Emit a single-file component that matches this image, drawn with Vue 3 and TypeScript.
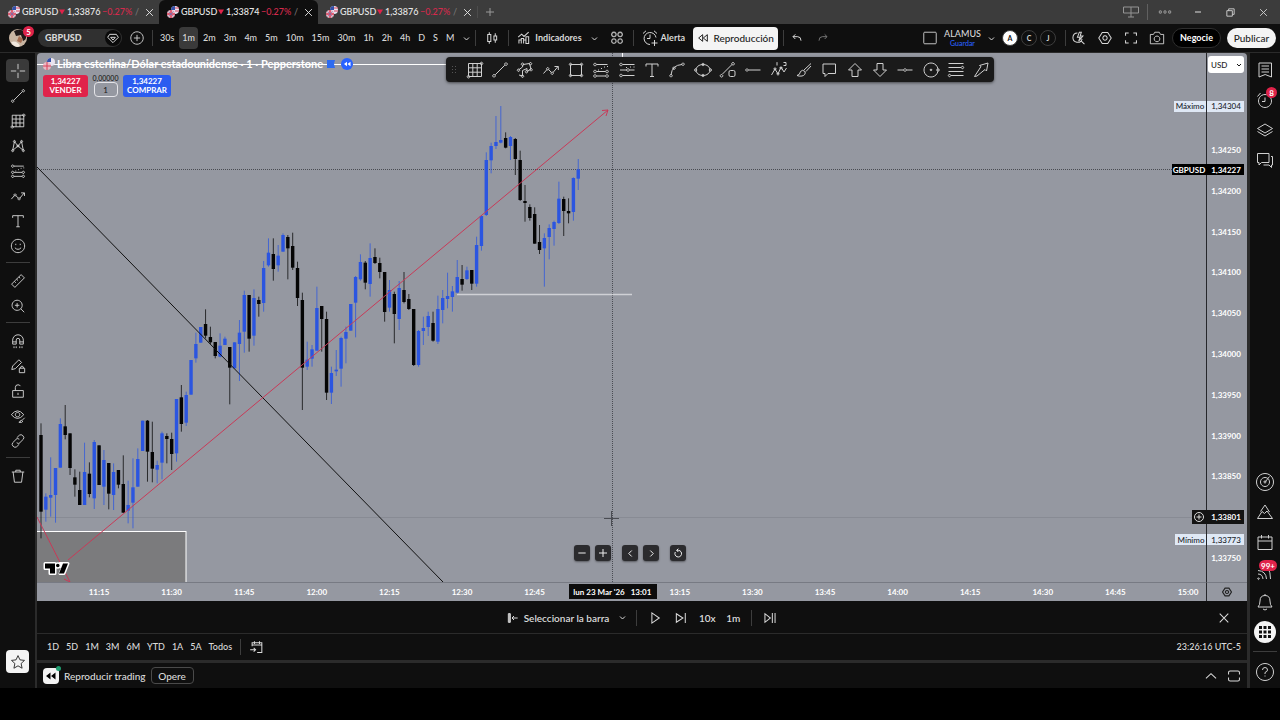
<script setup lang="ts">
import { h, ref } from 'vue'

const icons: Record<string, string> = {
  cross: 'M9 1v6M9 11v6M1 9h6M11 9h6',
  line: 'M4.2 13.8L13.8 4.2M3 13.5a1.3 1.3 0 1 0 .01 0zM15 1.8a1.3 1.3 0 1 0 .01 0z',
  gann: 'M2.5 2.5h13v13h-13zM2.5 6.8h13M2.5 11.2h13M6.8 2.5v13M11.2 2.5v13M2.5 14.4a1.3 1.3 0 1 0 .01 0zM15.5 1.2a1.3 1.3 0 1 0 .01 0z',
  pattern: 'M3 14L5 4L9 9L13 4L15 14L9 9L3 14M5 2.7a1.2 1.2 0 1 0 .01 0zM13 2.7a1.2 1.2 0 1 0 .01 0zM9 7.8a1.2 1.2 0 1 0 .01 0zM3 13a1.2 1.2 0 1 0 .01 0zM15 13a1.2 1.2 0 1 0 .01 0z',
  fib: 'M4.500 3.500h11M6 9h1M9 7.500h1M12 6h1M15 5.500h1M4.500 10.500h9M4.500 15h9M3 2.200a1.300 1.300 0 1 0 .01 0zM3 9.200a1.300 1.300 0 1 0 .01 0zM3 13.700a1.300 1.300 0 1 0 .01 0zM15 9.200a1.300 1.300 0 1 0 .01 0zM15 13.700a1.300 1.300 0 1 0 .01 0z',
  fib2: 'M4.500 3.500h12M2 9h7M11.500 9h5M4.500 14.500h12M8 6.500h1M12 6h1M15.500 6h1M3 2.200a1.300 1.300 0 1 0 .01 0zM10 7.700a1.300 1.300 0 1 0 .01 0zM3 13.200a1.300 1.300 0 1 0 .01 0z',
  zigzag: 'M1.5 12.5L5 8.5M6.5 8.5L9.5 11.5M11 11.5L16 5.5M12.5 5.5H16.3V9M5.7 6.6a1.2 1.2 0 1 0 .01 0zM10.2 11a1.2 1.2 0 1 0 .01 0z',
  text: 'M3 5.5V3H15V5.5M9 3V15.500M7 15.500h4',
  smile: 'M9 1.500a7.500 7.500 0 1 0 .01 0zM5.500 11q3.500 3.500 7 0M6.5 6.5v1.5M11.5 6.5v1.5',
  ruler: 'M1.8 12.5L12.5 1.8L16.2 5.5L5.5 16.2zM5 9.5l1.5 1.5M7.5 7l1.5 1.5M10 4.5l1.5 1.5',
  zoom: 'M8 2.5a5.7 5.7 0 1 0 .01 0zM12.2 12.3L16 16M5.5 8.2h5M8 5.7v5',
  magnet: 'M3 12.5V8a6 6 0 0 1 12 0v4.500h-4V8a2 2 0 0 0-4 0v4.500zM3 10h4M11 10h4M4.500 15v2M7 15v2M11 15v2M13.500 15v2',
  pencilLock: 'M2 13L3 9L10 2L13 5L6 12zM10.500 11.500h6v5h-6zM12 11.500v-1.500q1.500-2 3 0v1.500',
  lock: 'M3 8.500h12v7.500h-12zM6 8.500V5q0-3 3-3q2 0 2.700 1.500M9 11v2.500',
  eye: 'M1.500 7.500Q8.500-1 15.500 7.500Q8.500 16 1.500 7.500zM8.500 5a2.500 2.500 0 1 0 .01 0zM10 16q2 0 2.500-2.500l2 1.500q-1 2-4.500 1M14 13.500l2.500-2.500',
  link: 'M7.500 5.500L10.500 2.500Q12.500 1 14.500 3Q16.500 5 15 7L11 11Q9.500 12.500 7.500 11M10.500 12.500L7.500 15.500Q5.500 17 3.500 15Q1.500 13 3 11L7 7Q8.500 5.500 10.500 7',
  trash: 'M2 4.500h14M6.500 4.500V2.500h5V4.500M3.500 4.500L5 16H13L14.500 4.500',
  star: 'M9 1.800L11.200 6.600L16.300 7.200L12.500 10.700L13.600 16L9 13.300L4.400 16L5.500 10.700L1.700 7.200L6.800 6.600z',
  poly: 'M2.500 9L6.500 6L7 3.500L13.500 2.500L15 8L11 10.500V7.500L6.500 9.500V15L3 14M6.500 2a1.200 1.200 0 1 0 .01 0zM14.500 1.500a1.200 1.200 0 1 0 .01 0zM15 7.500a1.200 1.200 0 1 0 .01 0zM2.500 8a1.200 1.200 0 1 0 .01 0zM10.500 9.500a1.200 1.200 0 1 0 .01 0zM6.500 14a1.200 1.200 0 1 0 .01 0z',
  rect: 'M3.500 3.500h11v11h-11zM3.500 2.200a1.200 1.200 0 1 0 .01 0zM14.500 2.200a1.200 1.200 0 1 0 .01 0zM3.500 13.300a1.200 1.200 0 1 0 .01 0zM14.500 13.300a1.200 1.200 0 1 0 .01 0z',
  curve: 'M3 14Q4 4 14 3.500M3 13.500a1.200 1.200 0 1 0 .01 0zM15 2a1.200 1.200 0 1 0 .01 0zM6 6a1.200 1.200 0 1 0 .01 0z',
  ellipse: 'M9 3.500C13 3.500 16 6 16 9S13 14.500 9 14.500S2 12 2 9S5 3.500 9 3.500M9 2.300a1.200 1.200 0 1 0 .01 0zM9 13.300a1.200 1.200 0 1 0 .01 0zM1.500 7.800a1.200 1.200 0 1 0 .01 0zM16.500 7.800a1.200 1.200 0 1 0 .01 0z',
  shape: 'M3.500 13L13 3.500M2.500 13.500a1.300 1.300 0 1 0 .01 0zM14 1.500a1.300 1.300 0 1 0 .01 0zM11.500 9.500h3q1.500 0 1.500 1.500v3q0 1.500-1.500 1.500h-3q-1.500 0-1.500-1.500v-3q0-1.500 1.500-1.500z',
  hray: 'M4.500 9H16.500M3 7.800a1.200 1.200 0 1 0 .01 0z',
  elliott: 'M1.500 14L5 8L8 13L11 6L14 11L16.500 7M7 1.500v3M6.500 2L7 1.500M13.500 1.500h2.500v3h-2.500M5 7a1 1 0 1 0 .01 0zM8 12a1 1 0 1 0 .01 0zM11 6a1 1 0 1 0 .01 0z',
  brush: 'M2 14.500Q5 14 5.500 10.500Q7.500 8 10 10.500Q11 14 7 15Q4 15.500 2 14.500M9 9L16 2.500M11 10.500L16 5',
  comment: 'M3 3h12.500v9.500H8L5 15.500V12.500H3z',
  up: 'M9 2.500L15.500 9H12v6.500H6V9H2.500z',
  down: 'M9 15.500L15.500 9H12V2.500H6V9H2.500z',
  hline: 'M1.500 9H7.500M10.500 9H16.500M9 7.700a1.300 1.300 0 1 0 .01 0z',
  target: 'M9 2a7 7 0 1 0 .01 0zM9 8.200a.8.8 0 1 0 .01 0zM16 7.800a1.200 1.200 0 1 0 .01 0z',
  levels: 'M1.500 2.500H16.500M1.500 6.500H14M1.500 10.500H16.500M4 14.500H16.500M15.500 5.300a1.200 1.200 0 1 0 .01 0zM2.500 13.300a1.200 1.200 0 1 0 .01 0z',
  arrow: 'M2.500 15.500L9 5.500L7.500 4.500L16 2L14.500 10L13 8.500L5 15z',
  plusCircle: 'M9 2a7 7 0 1 0 .01 0zM9 5.500v7M5.500 9h7',
  plus: 'M9 3v12M3 9h12',
  minus: 'M3.500 9h11',
  close: 'M3.500 3.500l11 11M14.500 3.500l-11 11',
  gem: 'M4 3.500h10l3 4.500L9 16L1 8zM5.500 8h7L9 12z',
  chevD: 'M4 7l5 5l5-5',
  chevU: 'M2.500 12L9 6l6.500 6',
  chevL: 'M11.500 3L5.500 9l6 6',
  chevR: 'M6.500 3l6 6l-6 6',
  candles: 'M3.500 4.500h4v9h-4zM5.500 1.500v3M5.500 13.500v3M11.500 6.500h3.500v5h-3.500zM13.200 3v3.500M13.200 11.500V15',
  indicators: 'M2.500 16V11.500h3V16M5.500 16V9.500h3V16M8.500 16V11.500h3V16M11.500 16V7.500h3.500V16zM1.500 8L6 4L9 7L15 1.500',
  tiles: 'M5.500 2.500a2.500 2.500 0 1 0 .01 0zM12.500 2.500a2.500 2.500 0 1 0 .01 0zM5.500 10a2.500 2.500 0 1 0 .01 0zM12.500 10a2.500 2.500 0 1 0 .01 0z',
  alert: 'M15 8.500A6 6 0 1 0 9 15.500M9 5.500V9.500H6M2 4.500L5 1.800M13 1.800L16 4.500M13.500 11v6M10.500 14h6',
  rewind: 'M8.500 4v10L2.500 9zM15.500 4v10L9.500 9z',
  undo: 'M6.500 3.500L3 7l3.500 3.500M3 7h7q5 0 5 6',
  redo: 'M11.500 3.500L15 7l-3.500 3.500M15 7H8q-5 0-5 6',
  square: 'M2 3.500q0-1 1-1h12q1 0 1 1v11q0 1-1 1H3q-1 0-1-1z',
  quick: 'M7 2.500A6 6 0 1 0 13 10M12 13l4 4M9.500 1.500L7 8h3.500L8.500 13L14 6.500h-3.500l1.500-5z',
  hex: 'M5.500 2h7L17 9l-4.500 7h-7L1 9zM9 6.200a2.800 2.800 0 1 0 .01 0z',
  full: 'M2 6V2.500H6M12 2.500h4V6M16 12v3.500h-4M6 15.500H2V12',
  camera: 'M1.500 5H5l1.500-2.500h5L13 5h3.500v10.500h-15zM9 6.800a3.200 3.200 0 1 0 .01 0z',
  list: 'M3 2h12.500v14L9.200 13.500L3 16zM5.500 5h7.500M5.500 8h7.500M5.500 11h7.500',
  clock: 'M9 3.500a6.500 6.500 0 1 0 .01 0zM9 6.500V10.500H6M1.500 5.500L4.500 2',
  layers: 'M9 3L16.500 7.500L9 12L1.500 7.500zM1.500 10.500L9 15L16.500 10.500',
  chat: 'M1.500 2.500h11.500v9H5.500l-2.500 2.500v-2.500H1.500zM15 5.500h1.500v8.500h-1v2.500l-2.500-2.500H7.500',
  radar: 'M9 .5a8.500 8.500 0 1 0 .01 0zM9 4.500a4.500 4.500 0 1 0 .01 0zM9 8a1 1 0 1 0 .01 0zM9.500 8.500L13.500 3.500',
  hills: 'M1.500 15.500L6 8.500L8.500 10.500L11 8L16.500 15.500zM4.500 8.500L9 2L13.500 9',
  calendar: 'M2 4h14v12.500H2zM2 8h14M5.500 2v3.500M12.500 2v3.500',
  feed: 'M2.500 15a.7.7 0 1 0 .01 0M2 11q4.500 0 5 5M2 7.500q8 .5 8.500 8.500M12 5q2.500 4 2.500 11',
  bell: 'M2 14Q4 12 4 8Q4 2.500 9 2.500T14 8Q14 12 16 14zM7 16q2 2 4 0M9 1v1.500',
  help: 'M9 .5a8.500 8.500 0 1 0 .01 0zM6.500 7q0-2.500 2.500-2.500T11.500 7Q11.500 8.500 9 9.500v1.500M9 12.500v1',
  bar: 'M2 2.500h3v13H2zM3.500 2.500v13M7.500 9h8.500M10.500 6L7.500 9l3 3',
  play: 'M5 2.500v13L14.500 9z',
  step: 'M3 3.500v11L11.500 9zM14.500 2.500v13',
  toEnd: 'M2.500 3.500v11L9.500 9zM12 2.500v13M15.500 2.500v13',
  goto: 'M4 8V3.500h12.500v12.500H10.500M4 6.500h12.500M7 1.500v3.500M13.500 1.500v3.500M1.500 12.500h7M6 10l2.500 2.500L6 15',
  reset: 'M5 7.500a5 5 0 1 0 5-2.500H7M9.500 2.500L7 5l2.500 2.500',
  restore: 'M2 7V4.500q0-2 2-2h10q2 0 2 2V7M2 11v2.500q0 2 2 2h10q2 0 2-2V11',
  display: 'M1.500 4h15v6h-15zM9 4v10M6 14h6',
  dots: 'M3 7.500a1.500 1.500 0 1 0 .01 0zM9 7.500a1.500 1.500 0 1 0 .01 0zM15 7.500a1.500 1.500 0 1 0 .01 0z',
  windows: 'M3 6h9v9H3zM6 6V3h9v9h-3',
}
const Icon = (p: { name: string }) =>
  h('svg', { class: 'ic', viewBox: '0 0 18 18', 'aria-hidden': 'true' }, [h('path', { d: icons[p.name] })])
Icon.props = ['name']

const tabs = [
  { price: '1,33876', active: false },
  { price: '1,33874', active: true },
  { price: '1,33876', active: false },
]
const intervals = ['30s', '1m', '2m', '3m', '4m', '5m', '10m', '15m', '30m', '1h', '2h', '4h', 'D', 'S', 'M']
const drawGroups = [
  [['cross', 'Cruz'], ['line', 'Línea de tendencia'], ['gann', 'Gann'], ['pattern', 'Patrones'], ['fib', 'Fibonacci'], ['zigzag', 'Previsión'], ['text', 'Texto'], ['smile', 'Emojis']],
  [['ruler', 'Regla'], ['zoom', 'Acercar']],
  [['magnet', 'Imán'], ['pencilLock', 'Modo dibujo'], ['lock', 'Bloquear'], ['eye', 'Ocultar'], ['link', 'Sincronizar']],
  [['trash', 'Eliminar']],
]
const favorites = ['gann', 'line', 'poly', 'zigzag', 'rect', 'fib', 'fib2', 'text', 'curve', 'ellipse', 'shape', 'hray', 'elliott', 'brush', 'comment', 'up', 'down', 'hline', 'target', 'levels', 'arrow']
const ranges = ['1D', '5D', '1M', '3M', '6M', 'YTD', '1A', '5A', 'Todos']
const quantity = ref('1')
const currency = ref('USD')

// One-minute bars in thirds of a pixel below each block's base: direction, high, body top, body bottom, low.
type Bar = [0 | 1, number, number, number, number]
const blocks: { base: number; bars: Bar[] }[] = [
  {
    base: 380,
    bars: [
      [0, 130, 165, 395, 475], [1, 340, 350, 389, 425], [1, 232, 345, 353, 410], [1, 264, 264, 345, 428],
      [1, 115, 132, 263, 263], [0, 75, 139, 165, 178], [0, 160, 160, 264, 285], [0, 268, 292, 314, 350],
      [0, 275, 330, 375, 375], [1, 188, 276, 375, 375], [0, 247, 281, 342, 352], [1, 180, 186, 355, 387],
      [0, 196, 196, 315, 315], [1, 210, 240, 320, 375], [0, 249, 249, 341, 388], [1, 250, 276, 345, 390],
      [0, 270, 270, 314, 325], [0, 226, 312, 398, 398], [1, 302, 375, 392, 430], [1, 235, 322, 368, 445],
      [1, 205, 237, 320, 320], [1, 122, 122, 213, 213], [0, 120, 122, 215, 305], [0, 125, 216, 266, 307],
      [1, 242, 255, 269, 310], [1, 155, 160, 248, 298], [0, 160, 168, 177, 250], [0, 158, 177, 222, 270],
      [1, 57, 57, 220, 245], [0, 15, 52, 132, 155], [1, 35, 45, 128, 138],
    ],
  },
  {
    base: 220,
    bars: [
      [1, 420, 420, 524, 524], [1, 338, 372, 415, 428], [1, 321, 321, 368, 368], [0, 268, 312, 347, 355],
      [0, 320, 351, 367, 372], [0, 366, 366, 408, 415], [1, 340, 377, 410, 412], [1, 350, 356, 375, 375],
      [0, 381, 381, 443, 553], [1, 367, 367, 445, 445], [1, 300, 338, 372, 483], [1, 212, 225, 335, 398],
      [0, 225, 225, 356, 395], [1, 208, 234, 347, 377], [0, 230, 240, 252, 290], [1, 123, 144, 249, 275],
      [1, 55, 98, 136, 140], [0, 55, 102, 147, 182], [1, 75, 107, 136, 155], [1, 40, 45, 95, 95],
      [0, 45, 51, 85, 178], [0, 38, 78, 143, 150], [0, 125, 144, 234, 258], [0, 218, 240, 443, 570],
      [1, 365, 419, 440, 450], [1, 375, 388, 416, 440], [1, 200, 264, 392, 392], [0, 258, 258, 297, 395],
      [0, 275, 297, 518, 540], [1, 440, 459, 518, 552], [1, 390, 449, 454, 468], [1, 350, 354, 446, 500],
      [1, 320, 336, 356, 430], [1, 252, 252, 332, 332], [1, 168, 171, 248, 352], [1, 103, 126, 178, 182],
      [0, 123, 128, 188, 208], [1, 70, 114, 192, 230], [0, 85, 111, 129, 132], [0, 113, 129, 156, 175],
      [0, 156, 156, 276, 305], [1, 180, 210, 263, 275], [0, 215, 222, 282, 370], [1, 183, 204, 297, 330],
      [0, 156, 210, 246, 250], [0, 222, 237, 267, 270], [0, 267, 267, 435, 438],
    ],
  },
  {
    base: 90,
    bars: [
      [1, 720, 723, 825, 830], [1, 680, 714, 723, 765], [1, 665, 678, 711, 738], [0, 665, 699, 752, 755],
      [1, 617, 657, 755, 762], [1, 600, 624, 660, 700], [1, 548, 618, 627, 655], [1, 588, 604, 621, 665],
      [1, 510, 561, 608, 610], [0, 525, 567, 584, 602], [1, 530, 541, 567, 570], [0, 540, 540, 581, 600],
      [1, 440, 465, 581, 590], [1, 375, 378, 468, 482], [1, 187, 210, 375, 378], [1, 158, 168, 211, 250],
      [1, 78, 156, 168, 177], [1, 48, 150, 158, 160], [0, 127, 144, 173, 175], [1, 138, 141, 168, 210],
      [0, 144, 147, 207, 255], [0, 182, 210, 330, 333], [0, 285, 333, 339, 395], [0, 343, 351, 384, 392],
      [0, 352, 372, 461, 461], [0, 405, 456, 480, 492], [1, 430, 444, 475, 590], [1, 403, 414, 441, 508],
      [1, 392, 396, 417, 467], [1, 275, 326, 399, 402], [0, 320, 327, 363, 438], [0, 325, 363, 370, 400],
      [1, 262, 264, 366, 392], [1, 207, 238, 266, 300],
    ],
  },
]
const candles = blocks
  .flatMap(b => b.bars.map(([up, hi, top, bot, lo]) => ({ up, hi: b.base + hi / 3, top: b.base + top / 3, bot: b.base + bot / 3, lo: b.base + lo / 3 })))
  .map((c, i) => ({ ...c, x: 41 + i * 4.84 }))

const prices = ['1,34250', '1,34200', '1,34150', '1,34100', '1,34050', '1,34000', '1,33950', '1,33900', '1,33850', '', '1,33750']
  .map((label, i) => ({ label, y: 150 + i * 40.8 }))
const times = Array.from({ length: 16 }, (_, i) => {
  const m = 675 + i * 15
  return { label: `${Math.floor(m / 60)}:${String(m % 60).padStart(2, '0')}`, x: 99 + i * 72.6 }
}).filter(t => t.label !== '13:00')
</script>

<template>
  <div class="app">
    <header class="tabs">
      <div v-for="(t, i) in tabs" :key="i" class="tab" :class="{ active: t.active }">
        <svg class="pair" viewBox="0 0 12 12" aria-hidden="true">
          <circle cx="8" cy="4" r="4" fill="#e9e4f0" /><path d="M4 4a4 4 0 0 1 4-4v4z" fill="#3450a8" /><path d="M8 2h4M8 5h4" stroke="#d8405a" />
          <circle cx="4" cy="8" r="4" fill="#e8b9c4" /><path d="M4 4v8M0 8h8" stroke="#d8405a" stroke-width="1.500" /><path d="M1.500 5.500l5 5M6.500 5.500l-5 5" stroke="#6b78b8" stroke-width=".7" />
        </svg>
        <span class="tsym">GBPUSD</span>
        <svg class="tri" viewBox="0 0 7 6" aria-hidden="true"><path d="M0 0h7L3.500 6z" fill="#e0234a" /></svg>
        <span class="tprice">{{ t.price }}</span>
        <span class="tchg">−0.27%</span><span class="slash">/</span>
        <button class="bare tclose" aria-label="Cerrar pestaña"><Icon name="close" class="s11" /></button>
      </div>
      <button class="bare newtab" aria-label="Nueva pestaña"><Icon name="plus" class="s12" /></button>
      <div class="win">
        <button class="bare" aria-label="Pantallas"><Icon name="display" class="dim" /></button>
        <i class="vsep"></i>
        <button class="bare" aria-label="Más"><Icon name="dots" class="s14 dim" /></button>
        <button class="bare" aria-label="Minimizar"><Icon name="minus" class="s10" /></button>
        <button class="bare" aria-label="Restaurar"><Icon name="windows" class="s11" /></button>
        <button class="bare" aria-label="Cerrar"><Icon name="close" class="s11" /></button>
      </div>
    </header>

    <nav class="top">
      <button class="bare avatar" aria-label="Perfil">
        <svg viewBox="0 0 20 20" aria-hidden="true"><circle cx="10" cy="10" r="9" fill="#c9b5a2" /><path d="M6 3q7-4 11 2q3 6-2 8l-2-6l-5 1z" fill="#201818" /><path d="M3 14q6-2 9 4q-5 3-9-4z" fill="#f1e8de" /><path d="M11 8l4 3l-2 4l-4-2z" fill="#a66c50" /></svg>
        <span class="badge">5</span>
      </button>
      <button class="symbol"><b>GBPUSD</b><span class="gem"><Icon name="gem" class="s12" /></span></button>
      <button class="bare c30" aria-label="Comparar"><Icon name="plusCircle" class="s16" /></button>
      <i class="vsep"></i>
      <div class="ints">
        <button v-for="n in intervals" :key="n" class="bare int" :class="{ on: n === '1m' }">{{ n }}</button>
      </div>
      <button class="bare c18" aria-label="Más intervalos"><Icon name="chevD" class="s9" /></button>
      <i class="vsep"></i>
      <button class="bare c32" aria-label="Tipo de gráfico"><Icon name="candles" class="s14" /></button>
      <i class="vsep"></i>
      <button class="bare ind"><Icon name="indicators" class="s14" />Indicadores</button>
      <button class="bare c26" aria-label="Favoritos"><Icon name="chevD" class="s9" /></button>
      <button class="bare c18" aria-label="Plantillas"><Icon name="tiles" class="s16 dim2" /></button>
      <i class="vsep tail"></i>
      <button class="bare alert"><Icon name="alert" />Alerta</button>
      <button class="replay"><Icon name="rewind" class="s12" />Reproducción</button>
      <i class="vsep"></i>
      <button class="bare c26" aria-label="Deshacer"><Icon name="undo" class="s12" /></button>
      <button class="bare c26 off" aria-label="Rehacer"><Icon name="redo" class="s12" /></button>
      <div class="right">
        <button class="bare c30" aria-label="Diseño"><Icon name="square" class="s16" /></button>
        <button class="bare layout"><span>ALAMUS</span><span class="save">Guardar</span></button>
        <button class="bare c22" aria-label="Diseños"><Icon name="chevD" class="s9" /></button>
        <div class="accts"><button class="acct on">A</button><button class="acct">C</button><button class="acct">J</button></div>
        <i class="vsep"></i>
        <button class="bare c26" aria-label="Búsqueda rápida"><Icon name="quick" class="s14" /></button>
        <button class="bare c26" aria-label="Ajustes"><Icon name="hex" class="s14" /></button>
        <button class="bare c26" aria-label="Pantalla completa"><Icon name="full" class="s14" /></button>
        <button class="bare c26" aria-label="Instantánea"><Icon name="camera" class="s16" /></button>
        <button class="pill dark">Negocie</button>
        <button class="pill">Publicar</button>
      </div>
    </nav>

    <div class="body">
      <aside class="left">
        <template v-for="(g, gi) in drawGroups" :key="gi">
          <i v-if="gi" class="hsep"></i>
          <button v-for="d in g" :key="d[0]" class="bare tool" :class="{ on: d[0] === 'cross' }" :aria-label="d[1]"><span><Icon :name="d[0]" class="s16" /></span></button>
        </template>
        <button class="fav" aria-label="Barra de favoritos"><Icon name="star" class="s16" /></button>
      </aside>

      <main>
        <section class="chart">
          <svg class="plot" role="img" aria-label="Gráfico de velas GBPUSD">
            <g transform="translate(-37 -53)">
              <rect x="30" y="531.500" width="156" height="60" fill="#7b7b7d" stroke="#fff" />
              <path d="M37 64.500H446M622.500 53v5" stroke="#fff" />
              <path d="M37 517.500H2400" stroke="#888b94" />
              <path d="M612.500 53V600M37 169.500H2400" stroke="#4a4c53" stroke-dasharray="1 1" />
              <path d="M457 294.500H632" stroke="#cfd0d5" stroke-width="1.500" />
              <g v-for="(c, i) in candles" :key="i" :class="c.up ? 'up' : 'dn'">
                <rect :x="c.x - 0.5" :y="c.hi" width="1" :height="c.lo - c.hi" opacity=".75" />
                <rect :x="c.x - 1.7" :y="c.top" width="3.400" :height="Math.max(c.bot - c.top, 1.5)" />
              </g>
              <path d="M37 167L443 582" stroke="#111" fill="none" />
              <path d="M68 560L608 110M602 110.500L608 110L606 116M37 517L70 582M64 579L70 582" stroke="#c83a58" fill="none" />
              <path d="M611.500 511v15M604 518.500h15" stroke="#4a4c53" />
              <g stroke="#fff" stroke-width="3" stroke-linejoin="round"><path d="M45 563.500h10v10h-5v-5H45zM60 573.500l3-7h-2l-1-3h8l-4 10zM56 565.500a1.800 1.800 0 1 0 3.600 0a1.800 1.800 0 1 0-3.600 0" /></g>
              <path d="M45 563.500h10v10h-5v-5H45zM59 573.500l4-10h5l-4 10zM56 565.500a1.800 1.800 0 1 0 3.600 0a1.800 1.800 0 1 0-3.600 0" />
            </g>
          </svg>
          <svg class="paxis">
            <g transform="translate(0 -53)">
              <text v-for="p in prices" :key="p.y" x="19" :y="p.y + 3">{{ p.label }}</text>
              <rect x="-33" y="101" width="32" height="11" fill="#dfe8f5" /><rect x="0" y="101" width="37" height="11" fill="#dfe8f5" />
              <text class="dk" x="-17" y="109">Máximo</text><text class="dk" x="19" y="109">1,34304</text>
              <rect x="-35" y="164" width="72" height="11" fill="#000" />
              <text x="-18" y="173">GBPUSD</text><text x="19" y="173">1,34227</text>
              <rect x="-15" y="510" width="52" height="14" fill="#131313" />
              <circle cx="-8" cy="517" r="4.500" fill="none" stroke="#ddd" /><path d="M-8 514.500v5M-10.500 517h5" stroke="#ddd" />
              <text x="19" y="520">1,33801</text>
              <rect x="-32" y="534" width="31" height="11" fill="#dfe8f5" /><rect x="0" y="534" width="37" height="11" fill="#dfe8f5" />
              <text class="dk" x="-16" y="543">Mínimo</text><text class="dk" x="19" y="543">1,33773</text>
            </g>
          </svg>
          <svg class="taxis">
            <g transform="translate(-37 0)">
              <text v-for="t in times" :key="t.x" :x="t.x" y="12">{{ t.label }}</text>
              <rect x="569" y="1" width="88" height="15" fill="#0c0c0c" />
              <text x="599" y="12">lun 23 Mar '26</text><text x="641" y="12">13:01</text>
            </g>
          </svg>
          <button class="bare corner" aria-label="Ajustes de escala"><Icon name="hex" class="s10" /></button>

          <div class="legend">
            <div class="title">
              <svg class="pair" viewBox="0 0 12 12" aria-hidden="true"><circle cx="8" cy="4" r="4" fill="#e9e4f0" /><path d="M4 4a4 4 0 0 1 4-4v4z" fill="#3450a8" /><circle cx="4" cy="8" r="4" fill="#e8b9c4" /><path d="M4 4v8M0 8h8" stroke="#d8405a" /></svg>
              <b>Libra esterlina/Dólar estadounidense · 1 · Pepperstone</b>
              <svg class="mark" viewBox="0 0 10 8" aria-hidden="true"><path d="M1 0h8L8 4l1 4H1z" fill="#2d6bf0" /></svg>
              <svg class="rw" viewBox="0 0 12 12" aria-hidden="true"><circle cx="6" cy="6" r="6" fill="#2962ff" /><path d="M6 3.800v4.400L3 6zM9.500 3.800v4.400L6.500 6z" fill="#fff" /></svg>
            </div>
            <div class="orders">
              <button class="sell"><span>1,34227</span><span>VENDER</span></button>
              <label class="qty"><span>0,00000</span><input v-model="quantity" aria-label="Cantidad" /></label>
              <button class="buy"><span>1,34227</span><span>COMPRAR</span></button>
            </div>
          </div>
          <div class="floatbar">
            <span class="grip"></span>
            <button v-for="f in favorites" :key="f" class="bare" :aria-label="f"><Icon :name="f" /></button>
          </div>
          <select v-model="currency" class="cur" aria-label="Divisa"><option>USD</option></select>
          <svg class="curchev" viewBox="0 0 6 4" aria-hidden="true"><path d="M1 1l2 2l2-2" fill="none" stroke="#111" /></svg>
          <div class="nav">
            <button aria-label="Alejar"><Icon name="minus" class="s12" /></button>
            <button aria-label="Acercar"><Icon name="plus" class="s12" /></button>
            <button class="gap" aria-label="Atrás"><Icon name="chevL" class="s9" /></button>
            <button aria-label="Adelante"><Icon name="chevR" class="s9" /></button>
            <button class="gap" aria-label="Restablecer"><Icon name="reset" class="s12" /></button>
          </div>
        </section>

        <section class="rbar">
          <div class="rmid">
            <button class="bare selbar"><Icon name="bar" class="s12" />Seleccionar la barra<Icon name="chevD" class="s9" /></button>
            <i class="vsep"></i>
            <button class="bare c26" aria-label="Reproducir"><Icon name="play" class="s14" /></button>
            <button class="bare c26" aria-label="Avanzar"><Icon name="step" class="s14" /></button>
            <button class="bare c26">10x</button>
            <button class="bare c26">1m</button>
            <i class="vsep"></i>
            <button class="bare c26" aria-label="Ir al final"><Icon name="toEnd" class="s14" /></button>
          </div>
          <button class="bare rclose" aria-label="Cerrar"><Icon name="close" class="s14" /></button>
        </section>
        <section class="ranges">
          <button v-for="r in ranges" :key="r" class="bare">{{ r }}</button>
          <i class="vsep"></i>
          <button class="bare" aria-label="Ir a la fecha"><Icon name="goto" class="s14" /></button>
          <button class="bare time">23:26:16 UTC-5</button>
        </section>
        <section class="trade">
          <span class="tl"><svg viewBox="0 0 16 16" aria-hidden="true"><path d="M7.500 4.500v7L3 8zM12.500 4.500v7L8 8z" /></svg></span>
          <span>Reproducir trading</span>
          <button class="opere">Opere</button>
          <button class="bare end" aria-label="Expandir"><Icon name="chevU" class="s14" /></button>
          <button class="bare" aria-label="Maximizar"><Icon name="restore" class="s14" /></button>
        </section>
      </main>

      <aside class="rightbar">
        <button class="bare" aria-label="Lista"><Icon name="list" /></button>
        <button class="bare" aria-label="Alertas"><Icon name="clock" /><span class="badge">8</span></button>
        <button class="bare" aria-label="Capas"><Icon name="layers" /></button>
        <button class="bare" aria-label="Chat"><Icon name="chat" /></button>
        <button class="bare push" aria-label="Filtros"><Icon name="radar" /></button>
        <button class="bare" aria-label="Pine"><Icon name="hills" /></button>
        <button class="bare" aria-label="Calendario"><Icon name="calendar" /></button>
        <button class="bare" aria-label="Noticias"><Icon name="feed" /><span class="badge wide">99+</span></button>
        <button class="bare" aria-label="Notificaciones"><Icon name="bell" /></button>
        <button class="bare" aria-label="Productos">
          <svg class="apps" viewBox="0 0 22 22" aria-hidden="true"><circle cx="11" cy="11" r="11" fill="#f4f4f4" /><path d="M5 6.500h12M5 11h12M5 15.500h12" stroke="#111" stroke-width="3" stroke-dasharray="3 1.500" /></svg>
        </button>
        <i class="hsep"></i>
        <button class="bare" aria-label="Ayuda"><Icon name="help" /></button>
      </aside>
    </div>
    <footer></footer>
  </div>
</template>

<style>
body { margin: 0; background: #000; }
</style>

<style scoped>
.app { display: flex; flex-direction: column; min-height: 100vh; background: #2b2b2b; color: #dbdbdb; font: 500 10px/12px Lato, "Open Sans", sans-serif; }
.app * { box-sizing: border-box; }
button, input, select { font: inherit; color: inherit; margin: 0; padding: 0; border: 0; }
button { display: flex; align-items: center; justify-content: center; flex: none; white-space: nowrap; }
.bare { background: none; position: relative; }
.ic { width: 18px; height: 18px; fill: none; stroke: currentColor; stroke-width: 1; flex: none; }
.s9 { width: 9px; height: 9px; stroke-width: 2; }
.s10 { width: 10px; height: 10px; stroke-width: 2; }
.s11 { width: 11px; height: 11px; stroke-width: 1.500; }
.s12 { width: 12px; height: 12px; stroke-width: 1.500; }
.s14 { width: 14px; height: 14px; stroke-width: 1.300; }
.s16 { width: 16px; height: 16px; }
.dim { opacity: .6; }
.dim2 { opacity: .8; stroke-width: 1.500; }
.vsep { width: 1px; height: 16px; background: #3d3d3d; flex: none; }
.hsep { width: 24px; height: 1px; background: #3d3d3d; flex: none; margin: 4px 0 5px; }
.c18 { width: 18px; } .c22 { width: 22px; } .c26 { width: 26px; } .c30 { width: 30px; } .c32 { width: 32px; }
.badge { position: absolute; display: flex; align-items: center; justify-content: center; min-width: 11px; height: 11px; border-radius: 6px; background: #e0234a; color: #fff; font-size: 8px; font-weight: 700; }

.tabs { display: flex; align-items: center; height: 24px; background: #3c3c3c; }
.tab { display: flex; align-items: center; width: 159px; height: 24px; padding: 0 4px 0 8px; font-size: 9px; color: #e8e8e8; }
.tab.active { background: #0f0f0f; border-radius: 6px 6px 0 0; }
.pair { width: 12px; height: 12px; flex: none; }
.tsym { width: 37px; margin-left: 2px; }
.tri { width: 6px; height: 6px; margin-right: 2px; flex: none; }
.tprice { width: 35px; }
.tchg { width: 33px; color: #d42a4c; }
.slash { color: #777; }
.tclose { margin-left: auto; width: 12px; height: 12px; }
.newtab { width: 24px; border-left: 1px solid #4c4c4c; color: #999; }
.win { display: flex; align-items: center; margin-left: auto; color: #d0d0d0; }
.win button { width: 33px; }
.win .vsep { background: #606060; }

.top { display: flex; align-items: center; height: 28px; background: #0f0f0f; color: #d8d8d8; font-size: 9px; font-weight: 700; }
.avatar { width: 38px; padding-right: 3px; }
.avatar svg { width: 20px; height: 20px; }
.avatar .badge { left: 23px; top: -2px; }
.symbol { width: 84px; height: 18px; padding: 0 1px 0 7px; justify-content: space-between; background: #303030; border-radius: 9px; }
.gem { display: flex; align-items: center; justify-content: center; width: 16px; height: 16px; border-radius: 8px; background: #0a0a0a; }
.ints { display: flex; gap: 2px; padding-left: 4px; font-weight: 500; }
.int { height: 22px; padding: 0 3px; border-radius: 4px; }
.int.on { background: #3a3a3a; }
.ind { gap: 4px; padding-left: 8px; }
.tail { margin-left: 7px; }
.alert { gap: 2px; padding: 0 8px 0 7px; }
.replay { width: 85px; height: 23px; gap: 4px; margin-right: 5px; background: #f4f4f4; color: #222; border-radius: 4px; font-size: 10px; font-weight: 500; }
.off { opacity: .5; }
.right { display: flex; align-items: center; margin-left: auto; padding-right: 4px; }
.layout { flex-direction: column; line-height: 10px; width: 35px; font-weight: 500; }
.save { color: #2962ff; font-size: 7px; line-height: 8px; }
.accts { display: flex; gap: 3px; padding-right: 9px; }
.acct { width: 16px; height: 16px; border-radius: 8px; border: 1px solid #3d3d3d; background: none; font-size: 7px; }
.acct.on { background: #fff; color: #111; }
.pill { height: 20px; width: 49px; border-radius: 10px; background: #f4f4f4; color: #222; font-size: 10px; font-weight: 500; margin-left: 6px; }
.pill.dark { background: #000; border: 1px solid #2e2e2e; color: #fff; font-size: 9px; font-weight: 700; margin-left: 2px; }

.body { display: flex; flex: 1; gap: 2px; padding-top: 1px; }
.left { display: flex; flex-direction: column; align-items: center; width: 35px; padding: 5px 0 15px; background: #0f0f0f; }
.tool { width: 24px; height: 25px; }
.tool span { display: flex; align-items: center; justify-content: center; width: 23px; height: 23px; border-radius: 4px; flex: none; }
.tool.on span { background: #3a3a3a; }
.fav { width: 23px; height: 23px; margin-top: auto; border-radius: 4px; background: #f4f4f4; color: #222; }
main { display: flex; flex-direction: column; flex: 1; min-width: 0; }
.chart { position: relative; flex: 1; display: grid; grid-template: 1fr 19px / 1fr 41px; background: #9598a1; border-radius: 4px 4px 0 0; overflow: hidden; }
.plot { width: 100%; height: 100%; min-height: 529px; }
.paxis { width: 100%; height: 100%; overflow: visible; border-left: 1px solid #26272b; position: relative; }
.taxis { width: 100%; height: 19px; border-top: 1px solid #777a83; }
.corner { border-left: 1px solid #26272b; border-top: 1px solid #777a83; color: #222; }
text { font-size: 8px; font-weight: 700; fill: #fff; text-anchor: middle; }
text.dk { fill: #20242c; font-weight: 500; }
.up { fill: #2b55e0; } .dn { fill: #050505; }
.legend { position: absolute; left: 6px; top: 3px; display: flex; flex-direction: column; gap: 4px; }
.title { display: flex; align-items: center; height: 15px; color: #fff; font-size: 11px; gap: 2px; }
.mark { width: 10px; height: 8px; margin-left: 1px; }
.rw { width: 12px; height: 12px; margin-left: 3px; background: #9598a1; }
.orders { display: flex; gap: 5px; color: #fff; }
.sell, .buy { flex-direction: column; width: 45px; height: 22px; border-radius: 3px; background: #e0234a; font-size: 8px; line-height: 9px; font-weight: 700; }
.buy { width: 48px; background: #2b5cf0; }
.qty { display: flex; flex-direction: column; align-items: center; width: 25px; color: #222; font-size: 7px; line-height: 8px; margin-top: -1px; }
.qty input { width: 24px; height: 15px; border: 1px solid #e4e4e8; border-radius: 4px; background: none; text-align: center; font-size: 8px; }
.floatbar { position: absolute; left: 409px; top: 4px; width: 548px; height: 25px; display: flex; align-items: center; background: #1a1a1a; border-radius: 4px; box-shadow: 0 1px 3px #0008; color: #d0d0d0; }
.floatbar button { flex: 1; }
.grip { width: 7px; height: 9px; margin: 0 4px 0 5px; background: radial-gradient(circle, #555 1px, transparent 1px) 0 0 / 3px 3px; }
.cur { position: absolute; right: 3px; top: 3px; width: 36px; height: 17px; padding-left: 3px; border-radius: 3px; background: #fff; color: #222; font-size: 8px; appearance: none; }
.curchev { position: absolute; right: 5px; top: 10px; width: 6px; height: 4px; }
.nav { position: absolute; left: 0; right: 37px; bottom: 40px; display: flex; gap: 5px; justify-content: center; margin-right: -13px; }
.nav button { width: 16px; height: 16px; border-radius: 3px; background: #2b2b2e; color: #eee; box-shadow: 0 1px 2px #0006; }
.nav .gap { margin-left: 6px; }

.rbar, .ranges, .trade { display: flex; align-items: center; background: #0f0f0f; font-weight: 500; }
.rbar { height: 33px; padding-top: 1px; border-bottom: 1px solid #2b2b2b; position: relative; justify-content: center; }
.rmid { display: flex; align-items: center; padding-left: 6px; font-weight: 600; }
.selbar { gap: 5px; padding-right: 9px; }
.selbar .s9 { margin-left: 4px; }
.rmid .vsep + .c26 { margin-left: 5px; }
.rmid .c26 + .vsep { margin-left: 5px; }
.rclose { position: absolute; right: 16px; }
.ranges { height: 26px; gap: 7px; padding: 0 6px 0 10px; font-size: 9px; }
.ranges .vsep { margin: 0 1px; }
.time { margin-left: auto; }
.trade { height: 25px; margin-top: 3px; padding: 0 6px; }
.tl { position: relative; width: 16px; height: 16px; border-radius: 4px; background: #f4f4f4; margin-right: 5px; }
.tl svg { display: block; }
.tl::after { content: ""; position: absolute; right: -2px; top: -2px; width: 5px; height: 5px; border-radius: 3px; background: #1f9d70; }
.opere { margin-left: 5px; width: 43px; height: 17px; background: none; border: 1px solid #4a4a4a; border-radius: 4px; }
.end { margin-left: auto; margin-right: 9px; }
.rightbar { display: flex; flex-direction: column; align-items: center; width: 30px; padding: 2px 0 1px; margin-left: 1px; background: #0f0f0f; color: #d0d0d0; }
.rightbar button { width: 30px; height: 30px; }
.rightbar .push { margin-top: auto; }
.rightbar .badge { right: 3px; top: 2px; }
.rightbar .wide { right: 3px; top: 3px; padding: 0 2px; }
.apps { width: 22px; height: 22px; }
footer { height: 32px; background: #000; }
</style>
